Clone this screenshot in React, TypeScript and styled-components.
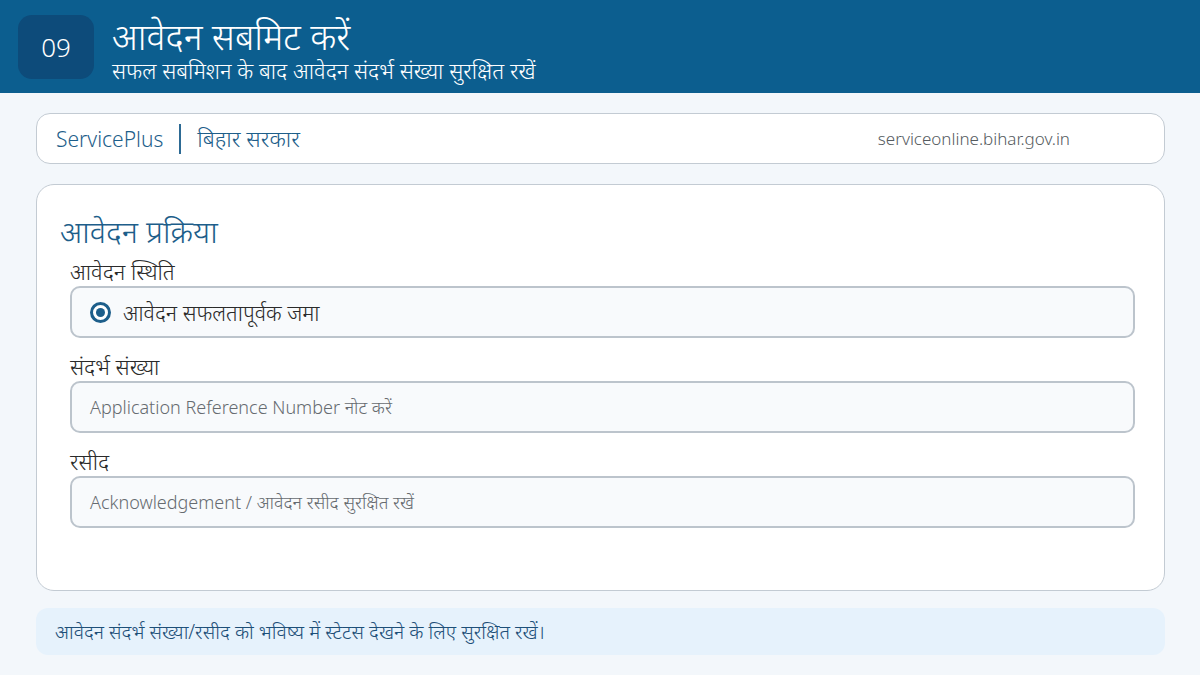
import React from "react";
import styled, { createGlobalStyle } from "styled-components";

const GlobalStyle = createGlobalStyle`
  * { box-sizing: border-box; }
  html, body { margin: 0; padding: 0; }
  body {
    width: 1200px;
    height: 675px;
    overflow: hidden;
    background: #f3f7fb;
    font-family: "Noto Sans", sans-serif;
    font-weight: 300;
  }
`;

const Page = styled.div`
  width: 1200px;
  height: 675px;
  display: flex;
  flex-direction: column;
  background: #f3f7fb;
`;

const Header = styled.header`
  height: 93px;
  background: #0c5e8f;
  display: flex;
  align-items: center;
  padding: 0 18px;
  gap: 18px;
  flex-shrink: 0;
`;

const StepBadge = styled.div`
  width: 76px;
  height: 64px;
  border-radius: 14px;
  background: #0d4b7a;
  color: #ffffff;
  font-size: 26px;
  display: flex;
  align-items: center;
  justify-content: center;
`;

const HeaderText = styled.div`
  display: flex;
  flex-direction: column;
  color: #ffffff;
  padding-top: 6px;
`;

const HeaderTitle = styled.h1`
  margin: 0;
  font-weight: 300;
  font-size: 36px;
  line-height: 40px;
`;

const HeaderSub = styled.div`
  font-size: 22px;
  line-height: 26px;
`;

const Content = styled.main`
  padding: 20px 35px 0 36px;
  display: flex;
  flex-direction: column;
`;

const TopBar = styled.div`
  height: 51px;
  background: #ffffff;
  border: 1.5px solid #c3cbd3;
  border-radius: 14px;
  display: flex;
  align-items: center;
  padding: 0 94px 0 19px;
`;

const Brand = styled.span<{ $size: number }>`
  color: #1d5e8a;
  font-size: ${(p) => p.$size}px;
  font-weight: 300;
`;

const Divider = styled.span`
  width: 2px;
  height: 30px;
  background: #2d6a94;
  margin: 0 16px;
`;

const Url = styled.span`
  margin-left: auto;
  color: #555b60;
  font-size: 17px;
`;

const MainCard = styled.section`
  margin-top: 20px;
  height: 407px;
  background: #ffffff;
  border: 1.5px solid #c3cbd3;
  border-radius: 18px;
  padding: 26px 29px 0 23px;
  display: flex;
  flex-direction: column;
`;

const CardTitle = styled.h2`
  margin: 0 0 7px;
  font-weight: 300;
  font-size: 31px;
  line-height: 40px;
  color: #1d5e8a;
`;

const Field = styled.div`
  display: flex;
  flex-direction: column;
  padding-left: 10px;
  margin-bottom: 15px;
`;

const Label = styled.label`
  font-size: 22px;
  line-height: 28px;
  color: #2a2a2a;
  margin-top: -1px;
  margin-bottom: 1px;
`;

const Box = styled.div`
  height: 52px;
  background: #f8fafc;
  border: 2px solid #bcc4cc;
  border-radius: 10px;
  display: flex;
  align-items: center;
  padding: 0 18px;
  gap: 12px;
`;

const Radio = styled.span`
  width: 21px;
  height: 21px;
  border-radius: 50%;
  border: 3px solid #1d5e8a;
  display: flex;
  align-items: center;
  justify-content: center;
  background: #ffffff;
  &::after {
    content: "";
    width: 9px;
    height: 9px;
    border-radius: 50%;
    background: #1d5e8a;
  }
`;

const BoxText = styled.span`
  font-size: 21.5px;
  color: #2a2a2a;
`;

const Placeholder = styled.span`
  font-size: 18px;
  color: #666b70;
`;

const Note = styled.div`
  margin-top: 17px;
  height: 47px;
  background: #e6f2fc;
  border-radius: 12px;
  display: flex;
  align-items: center;
  padding: 0 19px;
  font-size: 19.5px;
  color: #1d4f78;
`;

export default function App() {
  return (
    <>
      <GlobalStyle />
      <Page>
        <Header>
          <StepBadge>09</StepBadge>
          <HeaderText>
            <HeaderTitle>आवेदन सबमिट करें</HeaderTitle>
            <HeaderSub>सफल सबमिशन के बाद आवेदन संदर्भ संख्या सुरक्षित रखें</HeaderSub>
          </HeaderText>
        </Header>
        <Content>
          <TopBar>
            <Brand $size={21}>ServicePlus</Brand>
            <Divider />
            <Brand $size={22.5}>बिहार सरकार</Brand>
            <Url>serviceonline.bihar.gov.in</Url>
          </TopBar>
          <MainCard>
            <CardTitle>आवेदन प्रक्रिया</CardTitle>
            <Field>
              <Label>आवेदन स्थिति</Label>
              <Box>
                <Radio />
                <BoxText>आवेदन सफलतापूर्वक जमा</BoxText>
              </Box>
            </Field>
            <Field>
              <Label>संदर्भ संख्या</Label>
              <Box>
                <Placeholder>Application Reference Number नोट करें</Placeholder>
              </Box>
            </Field>
            <Field>
              <Label>रसीद</Label>
              <Box>
                <Placeholder>Acknowledgement / आवेदन रसीद सुरक्षित रखें</Placeholder>
              </Box>
            </Field>
          </MainCard>
          <Note>आवेदन संदर्भ संख्या/रसीद को भविष्य में स्टेटस देखने के लिए सुरक्षित रखें।</Note>
        </Content>
      </Page>
    </>
  );
}
